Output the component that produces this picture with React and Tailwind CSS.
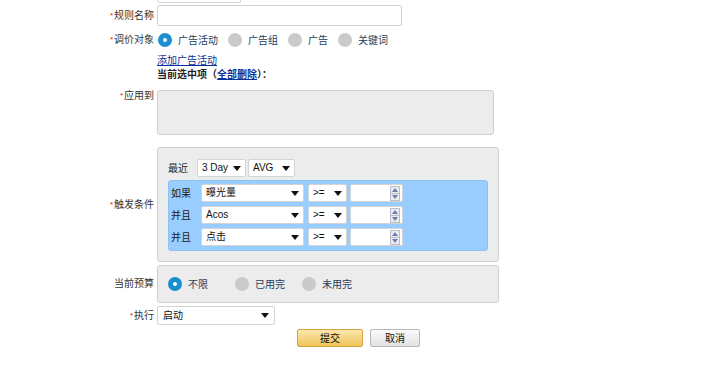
import React from "react";

const FONT = { fontFamily: '"Liberation Sans", "Noto Sans CJK SC", sans-serif' };

function Arrow() {
  return (
    <svg width="8" height="5" viewBox="0 0 8 5" className="shrink-0">
      <path d="M0 0 L8 0 L4 5 Z" fill="#111" />
    </svg>
  );
}

function Select({ w, text, cls = "" }) {
  return (
    <div
      className={`flex items-center justify-between bg-white border border-[#d4d4d4] rounded-[2px] pl-[4px] pr-[4px] h-full text-[#111] ${cls}`}
      style={{ width: w }}
    >
      <span className="leading-none">{text}</span>
      <Arrow />
    </div>
  );
}

function Spinner() {
  return (
    <div className="flex flex-col w-[10px] h-[15px] mr-[2px]">
      <div className="flex-1 flex items-center justify-center bg-[#ececf0] border border-[#b9bccb] border-b-0">
        <svg width="6" height="4" viewBox="0 0 6 4"><path d="M0 4 L6 4 L3 0 Z" fill="#6a7db0" /></svg>
      </div>
      <div className="flex-1 flex items-center justify-center bg-[#ececf0] border border-[#b9bccb]">
        <svg width="6" height="4" viewBox="0 0 6 4"><path d="M0 0 L6 0 L3 4 Z" fill="#6a7db0" /></svg>
      </div>
    </div>
  );
}

function Radio({ on }) {
  if (on)
    return (
      <span className="w-[14px] h-[14px] rounded-full bg-[#1b8ed2] flex items-center justify-center shrink-0">
        <span className="w-[4px] h-[4px] rounded-full bg-white" />
      </span>
    );
  return <span className="w-[14px] h-[14px] rounded-full bg-[#cacaca] shrink-0" />;
}

function Label({ text, req, cls = "items-center" }) {
  return (
    <div className={`w-[154px] shrink-0 flex justify-end text-[#333] ${cls}`}>
      {req && <span className="text-[#e11] text-[8px] leading-[10px] self-start mt-[1px] mr-[1px]">*</span>}
      <span className="leading-[12px]">{text}</span>
    </div>
  );
}

function CondRow({ label, field }) {
  return (
    <div className="flex h-[18px] items-center">
      <div className="w-[32px] pl-[2px] text-[#222]">{label}</div>
      <Select w={103} text={field} />
      <div className="w-[4px]" />
      <Select w={39} text=">=" />
      <div className="w-[3px]" />
      <div className="w-[53px] h-full bg-white border border-[#d4d4d4] rounded-[2px] flex items-center justify-end">
        <Spinner />
      </div>
    </div>
  );
}

export default function App() {
  return (
    <div className="w-[719px] h-[383px] bg-white text-[10px] text-[#333]" style={FONT}>
      <div className="ml-[157px] w-[84px] h-[3px] border border-t-0 border-[#d8d8d8] rounded-b-[2px]" />

      <div className="flex items-center h-[21px] mt-[2px]">
        <Label text="规则名称" req />
        <div className="ml-[3px] w-[245px] h-full border border-[#cfcfcf] rounded-[2px] bg-white" />
      </div>

      <div className="flex items-center h-[14px] mt-[7px]">
        <Label text="调价对象" req />
        <div className="ml-[4px] flex items-center text-[#1e3d5c]">
          <Radio on />
          <span className="ml-[6px] mr-[10px]">广告活动</span>
          <Radio />
          <span className="ml-[6px] mr-[10px]">广告组</span>
          <Radio />
          <span className="ml-[6px] mr-[10px]">广告</span>
          <Radio />
          <span className="ml-[6px]">关键词</span>
        </div>
      </div>

      <div className="ml-[157px] mt-[7px] h-[13px] leading-[13px]">
        <span className="text-[#0b2f9a] underline">添加广告活动</span>
      </div>
      <div className="ml-[157px] mt-[1px] h-[13px] leading-[13px] font-bold text-[#222]">
        当前选中项（<span className="text-[#0b2f9a] underline">全部删除</span>）：
      </div>

      <div className="flex mt-[9px]">
        <Label text="应用到" req cls="items-start" />
        <div className="ml-[3px] w-[337px] h-[45px] bg-[#ececec] border border-[#d0d0d0] rounded-[3px]" />
      </div>

      <div className="flex items-center mt-[12px]">
        <Label text="触发条件" req />
        <div className="ml-[3px] w-[342px] h-[115px] bg-[#ececec] border border-[#d0d0d0] rounded-[3px] pt-[11px] px-[10px]">
          <div className="flex items-center h-[18px]">
            <div className="w-[29px] text-[#222]">最近</div>
            <Select w={49} text="3 Day" />
            <div className="w-[2px]" />
            <Select w={47} text="AVG" />
          </div>
          <div className="mt-[3px] w-[320px] h-[71px] bg-[#99ccff] border border-[#8ec3ef] rounded-[3px] pt-[3px] flex flex-col gap-[4px]">
            <CondRow label="如果" field="曝光量" />
            <CondRow label="并且" field="Acos" />
            <CondRow label="并且" field="点击" />
          </div>
        </div>
      </div>

      <div className="flex items-center mt-[3px]">
        <Label text="当前预算" />
        <div className="ml-[3px] w-[342px] h-[38px] bg-[#ececec] border border-[#d0d0d0] rounded-[3px] pl-[10px] flex items-center text-[#1e3d5c]">
          <div className="w-[67px] flex items-center">
            <Radio on />
            <span className="ml-[6px]">不限</span>
          </div>
          <div className="w-[67px] flex items-center">
            <Radio />
            <span className="ml-[6px]">已用完</span>
          </div>
          <div className="flex items-center">
            <Radio />
            <span className="ml-[6px]">未用完</span>
          </div>
        </div>
      </div>

      <div className="flex items-center h-[19px] mt-[3px]">
        <Label text="执行" req />
        <div className="ml-[3px] h-full">
          <Select w={118} text="启动" cls="pl-[5px] pr-[5px] border-[#cfcfcf]" />
        </div>
      </div>

      <div className="flex mt-[4px] ml-[297px] gap-[7px] h-[18px]">
        <div className="w-[66px] h-full flex items-center justify-center rounded-[2px] border border-[#d3a341] bg-gradient-to-b from-[#fbe7ac] to-[#efc458] text-[#111]">
          提交
        </div>
        <div className="w-[50px] h-full flex items-center justify-center rounded-[2px] border border-[#b7b7b7] bg-gradient-to-b from-[#fafafa] to-[#e2e2e2] text-[#111]">
          取消
        </div>
      </div>
    </div>
  );
}
